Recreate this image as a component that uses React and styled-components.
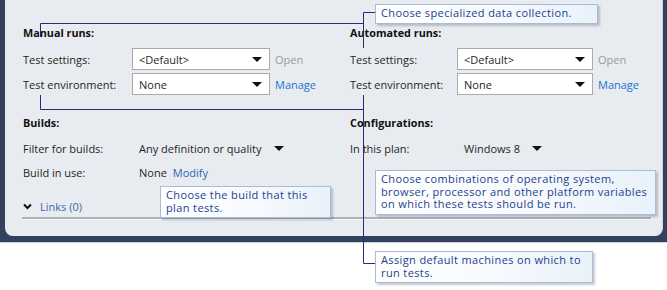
import React from "react";
import styled, { createGlobalStyle } from "styled-components";

const Global = createGlobalStyle`
  html, body { margin: 0; padding: 0; background: #ffffff; }
  body { font-family: "Open Sans", "Noto Sans", sans-serif; }
`;

const Stage = styled.div`
  position: relative;
  width: 667px;
  height: 290px;
  overflow: hidden;
  background: #ffffff;
`;

const Frame = styled.div`
  background: #33415f;
  padding: 0 4px 6px 5px;
  border-bottom: 1px solid #c9d1dc;
`;

const Panel = styled.div`
  height: 236px;
  box-sizing: border-box;
  background: #e8ecf0;
  border-radius: 0 0 8px 8px;
  border-right: 1px solid #cfd6de;
  padding: 25px 10px 0 18px;
  display: flex;
  flex-direction: column;
`;

const Columns = styled.div`
  display: grid;
  grid-template-columns: 327px 1fr;
`;

const Column = styled.div`
  display: flex;
  flex-direction: column;
`;

const Heading = styled.div`
  font-weight: 700;
  font-size: 10.8px;
  line-height: 16px;
  color: #111;
  margin-top: ${(p) => p.$top || 0}px;
`;

const Rows = styled.div`
  display: flex;
  flex-direction: column;
  gap: ${(p) => p.$gap}px;
  margin-top: ${(p) => p.$top}px;
`;

const Row = styled.div`
  display: flex;
  align-items: center;
  height: ${(p) => p.$h || 22}px;
  font-size: 11px;
  color: #1f1f1f;
`;

const Label = styled.div`
  width: ${(p) => p.$w}px;
  flex: none;
`;

const Select = styled.div`
  width: ${(p) => p.$w}px;
  height: 22px;
  box-sizing: border-box;
  background: #fff;
  border: 1px solid #ababab;
  display: flex;
  align-items: center;
  justify-content: space-between;
  padding: 0 7px 0 6px;
  flex: none;
`;

const Arrow = styled.span`
  width: 0;
  height: 0;
  border-left: 5px solid transparent;
  border-right: 5px solid transparent;
  border-top: 5px solid #111;
  margin-left: ${(p) => p.$ml || 0}px;
`;

const Link = styled.span`
  color: ${(p) => (p.$muted ? "#9a9a9a" : p.$dark ? "#2a66b0" : "#1c72d4")};
  margin-left: ${(p) => p.$ml || 5}px;
`;

const Value = styled.div`
  display: flex;
  align-items: center;
  padding-left: 7px;
`;

const LinksRow = styled.div`
  display: flex;
  align-items: center;
  margin-top: 16px;
  height: 16px;
  font-size: 11px;
  color: #3a67a8;
  gap: 8px;
`;

const Chevron = styled.svg`
  width: 9px;
  height: 7px;
`;

const Divider = styled.div`
  margin-top: 3px;
  height: 2px;
  background: #aeb3b8;
  border-bottom: 1px solid #f4f6f8;
  margin-right: 1px;
  margin-left: -1px;
`;

const Wires = styled.svg`
  position: absolute;
  left: 0;
  top: 0;
  width: 667px;
  height: 290px;
  pointer-events: none;
`;

const Callout = styled.div`
  position: absolute;
  left: ${(p) => p.$x}px;
  top: ${(p) => p.$y}px;
  width: ${(p) => p.$w}px;
  box-sizing: border-box;
  padding: 2px 5px 3px 5px;
  background: linear-gradient(90deg, #ffffff 0%, #f6f9fd 60%, #e9f1fa 100%);
  border: 1px solid #a7bdd6;
  box-shadow: 2px 2px 2px rgba(60, 70, 90, 0.28);
  color: #1b3f8f;
  font-family: "Open Sans", "Noto Sans", sans-serif;
  font-size: 11px;
  line-height: 12.5px;
  letter-spacing: 0.38px;
`;

export default function App() {
  return (
    <Stage>
      <Global />
      <Frame>
        <Panel>
          <Columns>
            <Column>
              <Heading>Manual runs:</Heading>
              <Rows $top={7} $gap={3}>
                <Row>
                  <Label $w={109}>Test settings:</Label>
                  <Select $w={138}>
                    &lt;Default&gt;
                    <Arrow />
                  </Select>
                  <Link $muted>Open</Link>
                </Row>
                <Row>
                  <Label $w={109}>Test environment:</Label>
                  <Select $w={138}>
                    None
                    <Arrow />
                  </Select>
                  <Link>Manage</Link>
                </Row>
              </Rows>
              <Heading $top={20}>Builds:</Heading>
              <Rows $top={7} $gap={4}>
                <Row $h={20}>
                  <Label $w={109}>Filter for builds:</Label>
                  <Value>
                    Any definition or quality
                    <Arrow $ml={13} />
                  </Value>
                </Row>
                <Row $h={20}>
                  <Label $w={109}>Build in use:</Label>
                  <Value>
                    None
                    <Link $dark $ml={6}>Modify</Link>
                  </Value>
                </Row>
              </Rows>
            </Column>
            <Column>
              <Heading>Automated runs:</Heading>
              <Rows $top={7} $gap={3}>
                <Row>
                  <Label $w={107}>Test settings:</Label>
                  <Select $w={136}>
                    &lt;Default&gt;
                    <Arrow />
                  </Select>
                  <Link $muted>Open</Link>
                </Row>
                <Row>
                  <Label $w={107}>Test environment:</Label>
                  <Select $w={136}>
                    None
                    <Arrow />
                  </Select>
                  <Link>Manage</Link>
                </Row>
              </Rows>
              <Heading $top={20}>Configurations:</Heading>
              <Rows $top={7} $gap={4}>
                <Row $h={20}>
                  <Label $w={107}>In this plan:</Label>
                  <Value>
                    Windows 8
                    <Arrow $ml={12} />
                  </Value>
                </Row>
              </Rows>
            </Column>
          </Columns>
          <LinksRow>
            <Chevron viewBox="0 0 9 7">
              <path d="M1 1.5 L4.5 5 L8 1.5" fill="none" stroke="#111" strokeWidth="2" />
            </Chevron>
            Links (0)
          </LinksRow>
          <Divider />
        </Panel>
      </Frame>

      <Wires viewBox="0 0 667 290">
        <g fill="none" stroke="#2c2a78" strokeWidth="1">
          <path d="M40.5 37 V23.5 H363.5" />
          <path d="M375 12.5 H363.5 V48" />
          <path d="M40.5 95 V109.5 H363.5" />
          <path d="M363.5 95 V263.5 H375" />
        </g>
      </Wires>

      <Callout $x={375} $y={4} $w={223}>Choose specialized data collection.</Callout>
      <Callout $x={160} $y={186} $w={171}>Choose the build that this plan tests.</Callout>
      <Callout $x={375} $y={170} $w={281}>
        Choose combinations of operating system, browser, processor and other platform variables on which these tests should be run.
      </Callout>
      <Callout $x={375} $y={251} $w={218}>Assign default machines on which to run tests.</Callout>
    </Stage>
  );
}
